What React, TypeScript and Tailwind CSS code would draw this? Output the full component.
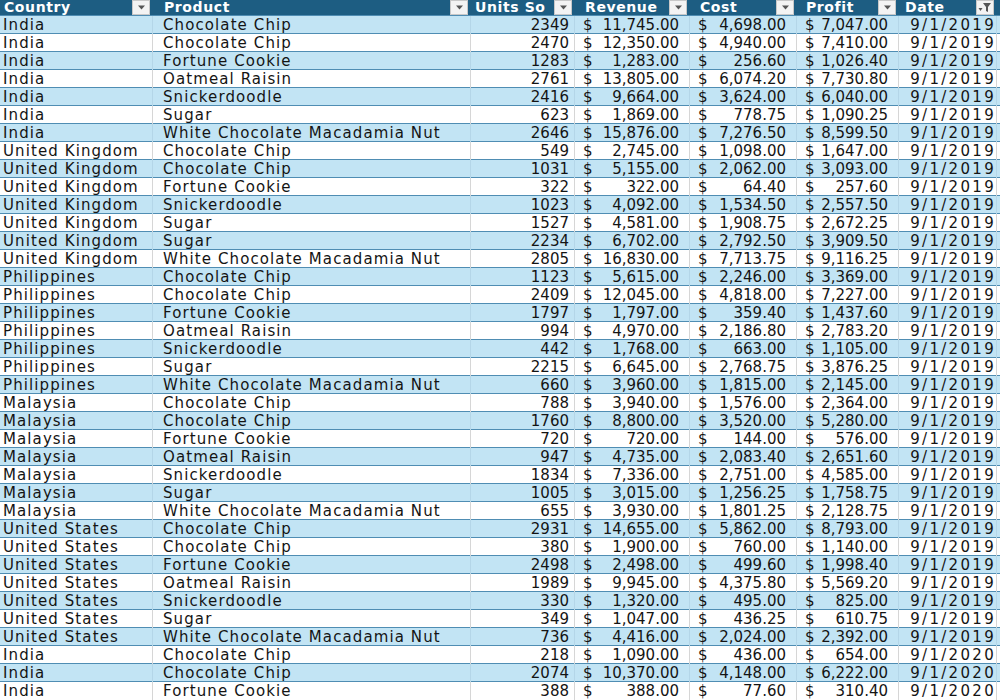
import React from "react";

type Row = [string, string, number, string, string, string, string];

const UK = "United Kingdom";
const US = "United States";
const W = "White Chocolate Macadamia Nut";
const CC = "Chocolate Chip";
const FC = "Fortune Cookie";
const OR = "Oatmeal Raisin";
const SN = "Snickerdoodle";
const SU = "Sugar";
const D19 = "9/1/2019";
const D20 = "9/1/2020";

const rows: Row[] = [
  ["India", CC, 2349, "11,745.00", "4,698.00", "7,047.00", D19],
  ["India", CC, 2470, "12,350.00", "4,940.00", "7,410.00", D19],
  ["India", FC, 1283, "1,283.00", "256.60", "1,026.40", D19],
  ["India", OR, 2761, "13,805.00", "6,074.20", "7,730.80", D19],
  ["India", SN, 2416, "9,664.00", "3,624.00", "6,040.00", D19],
  ["India", SU, 623, "1,869.00", "778.75", "1,090.25", D19],
  ["India", W, 2646, "15,876.00", "7,276.50", "8,599.50", D19],
  [UK, CC, 549, "2,745.00", "1,098.00", "1,647.00", D19],
  [UK, CC, 1031, "5,155.00", "2,062.00", "3,093.00", D19],
  [UK, FC, 322, "322.00", "64.40", "257.60", D19],
  [UK, SN, 1023, "4,092.00", "1,534.50", "2,557.50", D19],
  [UK, SU, 1527, "4,581.00", "1,908.75", "2,672.25", D19],
  [UK, SU, 2234, "6,702.00", "2,792.50", "3,909.50", D19],
  [UK, W, 2805, "16,830.00", "7,713.75", "9,116.25", D19],
  ["Philippines", CC, 1123, "5,615.00", "2,246.00", "3,369.00", D19],
  ["Philippines", CC, 2409, "12,045.00", "4,818.00", "7,227.00", D19],
  ["Philippines", FC, 1797, "1,797.00", "359.40", "1,437.60", D19],
  ["Philippines", OR, 994, "4,970.00", "2,186.80", "2,783.20", D19],
  ["Philippines", SN, 442, "1,768.00", "663.00", "1,105.00", D19],
  ["Philippines", SU, 2215, "6,645.00", "2,768.75", "3,876.25", D19],
  ["Philippines", W, 660, "3,960.00", "1,815.00", "2,145.00", D19],
  ["Malaysia", CC, 788, "3,940.00", "1,576.00", "2,364.00", D19],
  ["Malaysia", CC, 1760, "8,800.00", "3,520.00", "5,280.00", D19],
  ["Malaysia", FC, 720, "720.00", "144.00", "576.00", D19],
  ["Malaysia", OR, 947, "4,735.00", "2,083.40", "2,651.60", D19],
  ["Malaysia", SN, 1834, "7,336.00", "2,751.00", "4,585.00", D19],
  ["Malaysia", SU, 1005, "3,015.00", "1,256.25", "1,758.75", D19],
  ["Malaysia", W, 655, "3,930.00", "1,801.25", "2,128.75", D19],
  [US, CC, 2931, "14,655.00", "5,862.00", "8,793.00", D19],
  [US, CC, 380, "1,900.00", "760.00", "1,140.00", D19],
  [US, FC, 2498, "2,498.00", "499.60", "1,998.40", D19],
  [US, OR, 1989, "9,945.00", "4,375.80", "5,569.20", D19],
  [US, SN, 330, "1,320.00", "495.00", "825.00", D19],
  [US, SU, 349, "1,047.00", "436.25", "610.75", D19],
  [US, W, 736, "4,416.00", "2,024.00", "2,392.00", D19],
  ["India", CC, 218, "1,090.00", "436.00", "654.00", D20],
  ["India", CC, 2074, "10,370.00", "4,148.00", "6,222.00", D20],
  ["India", FC, 388, "388.00", "77.60", "310.40", D20],
];

const grid = "grid grid-cols-[153px_318px_104px_115px_107px_102px_98px_3px]";

function Arrow() {
  return (
    <div className="w-[18px] h-[15px] bg-[#f3f3f3] border border-[#c8c8c8] flex items-center justify-center shrink-0">
      <svg width="9" height="5" viewBox="0 0 9 5">
        <path d="M1 0.5 L8 0.5 L4.5 4.5 Z" fill="#555" />
      </svg>
    </div>
  );
}

function FilterIcon() {
  return (
    <div className="w-[18px] h-[15px] bg-[#f3f3f3] border border-[#c8c8c8] flex items-center justify-center shrink-0">
      <svg width="14" height="11" viewBox="0 0 14 11">
        <path d="M5 1 L13 1 L10 5 L10 10 L8 9 L8 5 Z" fill="#555" />
        <path d="M0.5 6 L4.5 6 L2.5 9 Z" fill="#555" />
      </svg>
    </div>
  );
}

function Head({ label, pad, filter }: { label: string; pad: string; filter?: boolean }) {
  return (
    <div className={`flex items-start justify-between pr-[3px] h-[15px] ${pad}`}>
      <span className="text-[14px] leading-[15px] font-bold text-white whitespace-nowrap tracking-[0.6px]">
        {label}
      </span>
      {filter ? <FilterIcon /> : <Arrow />}
    </div>
  );
}

function Money({ v, border }: { v: string; border: string }) {
  return (
    <div className={`flex justify-between pl-[8px] pr-[10px] ${border}`}>
      <span>$</span>
      <span>{v}</span>
    </div>
  );
}

export default function App() {
  return (
    <div
      className="w-[1000px] h-[700px] overflow-hidden bg-white text-[#141414] text-[15px]"
      style={{ fontFamily: '"DejaVu Sans", Verdana, sans-serif' }}
    >
      <div className={`${grid} bg-[#1d5d82] h-[15px]`}>
        <Head label="Country" pad="pl-[4px]" />
        <Head label="Product" pad="pl-[11px]" />
        <Head label="Units So" pad="pl-[4px]" />
        <Head label="Revenue" pad="pl-[10px]" />
        <Head label="Cost" pad="pl-[10px]" />
        <Head label="Profit" pad="pl-[9px]" />
        <Head label="Date" pad="pl-[6px]" filter />
        <div />
      </div>
      {rows.map((r, i) => {
        const blue = i % 2 === 0;
        const bg = blue ? "bg-[#c2e4f4]" : "bg-white";
        const bd = blue ? "border-r border-[#b4d6e8]" : "border-r border-[#d6d6d6]";
        return (
          <div
            key={i}
            className={`${grid} ${bg} h-[18px] leading-[18px] border-t border-[#4f8db3]`}
          >
            <div className={`pl-[3px] whitespace-nowrap tracking-[1.1px] ${bd}`}>{r[0]}</div>
            <div className={`pl-[10px] whitespace-nowrap tracking-[1.1px] ${bd}`}>{r[1]}</div>
            <div className={`text-right pr-[5px] ${bd}`}>{r[2]}</div>
            <Money v={r[3]} border={bd} />
            <Money v={r[4]} border={bd} />
            <Money v={r[5]} border={bd} />
            <div className={`text-right pr-0 tracking-[2.3px] ${bd}`}>{r[6]}</div>
            <div />
          </div>
        );
      })}
    </div>
  );
}
